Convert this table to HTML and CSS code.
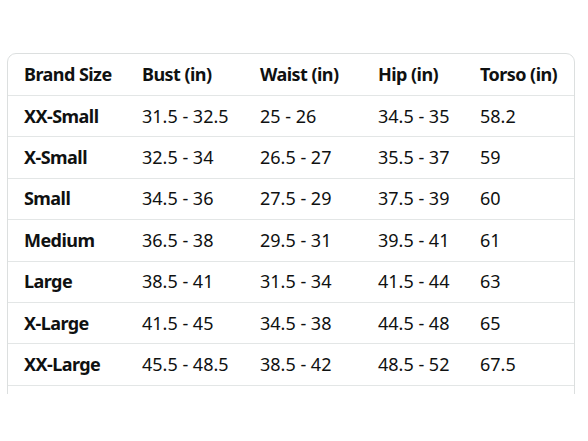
FILE: index.html
```html
<!DOCTYPE html>
<html lang="en">
<head>
<meta charset="utf-8">
<title>Size Chart</title>
<link rel="stylesheet" href="styles.css">
</head>
<body>
<div class="clip">
  <div class="card">
    <div class="row head">
      <div class="cell">Brand Size</div>
      <div class="cell">Bust (in)</div>
      <div class="cell">Waist (in)</div>
      <div class="cell">Hip (in)</div>
      <div class="cell">Torso (in)</div>
    </div>
    <div class="row">
      <div class="cell name">XX-Small</div>
      <div class="cell">31.5 - 32.5</div>
      <div class="cell">25 - 26</div>
      <div class="cell">34.5 - 35</div>
      <div class="cell">58.2</div>
    </div>
    <div class="row">
      <div class="cell name">X-Small</div>
      <div class="cell">32.5 - 34</div>
      <div class="cell">26.5 - 27</div>
      <div class="cell">35.5 - 37</div>
      <div class="cell">59</div>
    </div>
    <div class="row">
      <div class="cell name">Small</div>
      <div class="cell">34.5 - 36</div>
      <div class="cell">27.5 - 29</div>
      <div class="cell">37.5 - 39</div>
      <div class="cell">60</div>
    </div>
    <div class="row">
      <div class="cell name">Medium</div>
      <div class="cell">36.5 - 38</div>
      <div class="cell">29.5 - 31</div>
      <div class="cell">39.5 - 41</div>
      <div class="cell">61</div>
    </div>
    <div class="row">
      <div class="cell name">Large</div>
      <div class="cell">38.5 - 41</div>
      <div class="cell">31.5 - 34</div>
      <div class="cell">41.5 - 44</div>
      <div class="cell">63</div>
    </div>
    <div class="row">
      <div class="cell name">X-Large</div>
      <div class="cell">41.5 - 45</div>
      <div class="cell">34.5 - 38</div>
      <div class="cell">44.5 - 48</div>
      <div class="cell">65</div>
    </div>
    <div class="row">
      <div class="cell name">XX-Large</div>
      <div class="cell">45.5 - 48.5</div>
      <div class="cell">38.5 - 42</div>
      <div class="cell">48.5 - 52</div>
      <div class="cell">67.5</div>
    </div>
    <div class="row empty"></div>
  </div>
</div>
</body>
</html>
```

FILE: styles.css
```css
html, body {
  margin: 0;
  padding: 0;
  background: #ffffff;
}

body {
  font-family: "Noto Sans", "DejaVu Sans", sans-serif;
  font-size: 18px;
  color: #0f1111;
}

.clip {
  margin: 53px 13px 0 7px;
  height: 341px;
  overflow: hidden;
}

.card {
  border: 1px solid #dcdfdf;
  border-radius: 9px;
  background: #ffffff;
}

.row {
  display: grid;
  grid-template-columns: 118px 118px 118px 102px 1fr;
  height: 40.4px;
  align-items: center;
  border-top: 1px solid #e3e6e6;
}

.row.head {
  height: 41px;
  border-top: none;
  font-weight: 700;
  letter-spacing: -0.55px;
}

.cell {
  padding: 0 0 1px 16px;
  white-space: nowrap;
}

.cell.name {
  font-weight: 700;
  letter-spacing: -0.55px;
}

.row.empty {
  height: 40px;
}
```
